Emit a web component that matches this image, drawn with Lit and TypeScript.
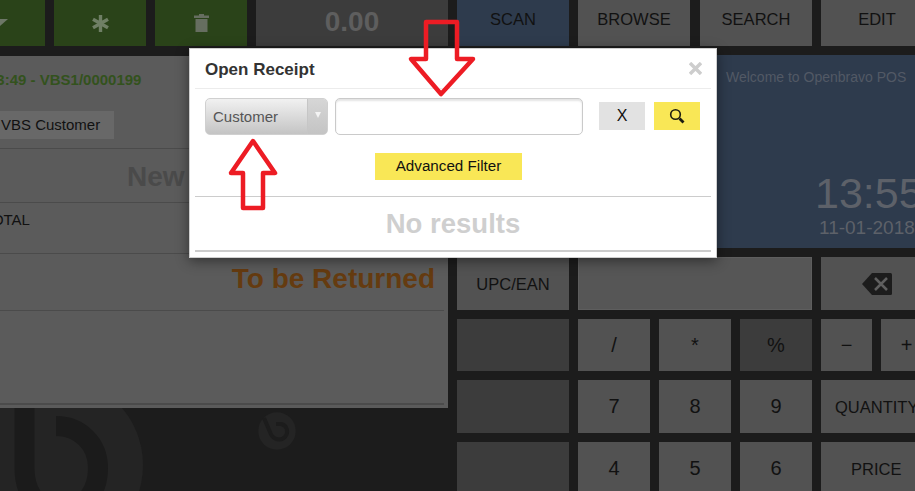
import { LitElement, html, css, svg } from "lit";
import { customElement } from "lit/decorators.js";

@customElement("app-root")
export class AppRoot extends LitElement {
  static styles = css`
    :host {
      display: block;
      position: relative;
      width: 915px;
      height: 491px;
      overflow: hidden;
      background: #1c1c1c;
      font-family: "Liberation Sans", Arial, sans-serif;
      color: #111;
    }
    * { box-sizing: border-box; }
    .watermark { position: absolute; left: 0; top: 0; width: 915px; height: 491px; }
    .screen {
      position: relative;
      display: grid;
      grid-template-columns: 448px 458px;
      column-gap: 9px;
      height: 491px;
      overflow: hidden;
    }
    .left { min-width: 0; overflow: hidden; }
    .left-top { display: flex; justify-content: flex-end; gap: 9px; height: 46px; }
    .tbtn {
      flex: 0 0 92px;
      background: #2a4319;
      display: flex; align-items: center; justify-content: center;
    }
    .total-box {
      flex: 0 0 192px;
      background: #3c3c3c;
      color: #5e5e5e;
      font-weight: 700;
      font-size: 28px;
      display: flex; align-items: center; justify-content: center;
      padding-bottom: 3px;
    }
    .panel {
      margin-top: 10px;
      height: 352px;
      background: #5b5b5b;
      padding-right: 4px;
      overflow: hidden;
    }
    .sec { border-bottom: 1px solid #4b4b4b; }
    .s1 { height: 93px; padding-top: 15px; }
    .s2 { height: 54px; padding: 12px 0 0 127px; font-size: 28px; font-weight: 700; color: #4a4a4a; line-height: 32px; }
    .s3 { height: 51px; padding-top: 8px; font-size: 15px; line-height: 17px; }
    .s3 span { display: block; margin-left: -17px; }
    .s4 { height: 57px; padding: 9px 9px 0 0; text-align: right; font-size: 28px; font-weight: 700; line-height: 32px; color: #653b10; }
    .s5 { height: 94px; border-bottom-width: 2px; }
    .ticket { font-size: 15px; font-weight: 700; line-height: 18px; color: #33521d; margin-left: -12px; white-space: nowrap; }
    .chip {
      margin-top: 22px;
      width: 114px; height: 28px;
      background: #686868;
      font-size: 15px;
      line-height: 27px;
      padding-left: 1px;
      white-space: nowrap;
    }
    .right { min-width: 0; overflow: hidden; }
    .tabs { display: flex; gap: 9px; height: 46px; }
    .tab {
      flex: 0 0 112px;
      background: #525252;
      font-size: 16.5px;
      display: flex; align-items: center; justify-content: center;
      padding-bottom: 7px;
    }
    .tab.active { background: #2e3b4d; }
    .tab.shift { margin-left: 1px; }
    .clock {
      margin-top: 9px;
      height: 193px;
      background: #2e3b4d;
      color: #5d6169;
      padding-left: 269px;
      overflow: hidden;
      white-space: nowrap;
    }
    .welcome { font-size: 14px; line-height: 16px; margin-top: 14px; color: #525965; }
    .time { font-size: 43px; line-height: 48px; margin: 84px 0 0 89px; }
    .date { font-size: 19px; line-height: 22px; margin: 0 0 0 93px; }
    .keys {
      margin-top: 9px;
      display: grid;
      grid-template-columns: 112px 72px 72px 72px 51px 51px;
      grid-template-rows: 53px 52px 53px 53px;
      gap: 9px;
    }
    .key {
      background: #525252;
      font-size: 20px;
      display: flex; align-items: center; justify-content: center;
      white-space: nowrap;
      overflow: hidden;
    }
    .key.word { font-size: 16.5px; padding-top: 1px; }
    .key.off { background: #3c3c3c; }
    .key.display { grid-column: span 3; background: #565656; border: 1px solid #5e5e5e; }
    .key.back { grid-column: span 2; }
    .key.wide { grid-column: span 2; justify-content: flex-start; }
    .key.q { padding-left: 14px; }
    .key.p { padding-left: 30px; }
    .modal {
      position: absolute;
      left: 189px; top: 48px;
      width: 528px; height: 210px;
      background: #fff;
      border: 1px solid #cfcfcf;
      box-shadow: 0 3px 12px rgba(0,0,0,.45);
      padding: 0 5px;
    }
    .head {
      height: 40px;
      border-bottom: 1px solid #ececec;
      display: flex; align-items: center; justify-content: space-between;
      padding: 0 9px 0 10px;
    }
    .title { font-size: 17px; font-weight: 700; color: #333; padding-top: 3px; }
    .filters {
      margin-top: 9px;
      display: flex; align-items: center;
      height: 37px;
      padding-left: 10px;
    }
    .select {
      width: 123px; height: 37px;
      border: 1px solid #d0d0d0;
      border-radius: 5px;
      background: linear-gradient(#f1f1f1, #c4c4c4);
      display: flex;
      font-size: 15px;
      color: #555;
      overflow: hidden;
    }
    .select .val { flex: 1; padding-left: 7px; line-height: 35px; }
    .select .arr {
      width: 20px;
      background: linear-gradient(#d6d6d6, #c4c4c4);
      border-left: 1px solid #c6c6c6;
      display: flex; justify-content: center; padding-top: 13px;
    }
    .tri { width: 0; height: 0; border-left: 3.5px solid transparent; border-right: 3.5px solid transparent; border-top: 6px solid #f4f4f4; }
    input {
      margin-left: 7px;
      width: 248px; height: 37px;
      border: 1px solid #cacaca;
      border-radius: 5px;
      box-shadow: inset 0 2px 2px #e4e4e4;
      background: #fff;
      outline: none;
    }
    .mbtn {
      width: 46px; height: 28px;
      margin-bottom: 1px;
      display: flex; align-items: center; justify-content: center;
      font-size: 16px;
    }
    .mbtn.x { margin-left: 16px; background: #e2e2e2; }
    .mbtn.s { margin-left: 9px; background: #f9e756; }
    .adv {
      margin: 18px 0 0 180px;
      width: 147px; height: 27px;
      background: #f9e756;
      font-size: 15.2px;
      display: flex; align-items: center; justify-content: center;
      padding-bottom: 2px;
    }
    .none {
      margin-top: 16px;
      height: 56px;
      border-top: 1px solid #cccccc;
      border-bottom: 2px solid #cccccc;
      display: flex; align-items: center; justify-content: center;
      font-size: 27.5px; font-weight: 700; color: #cfcfcf;
    }
    .arrow { position: absolute; left: 0; top: 0; width: 915px; height: 491px; pointer-events: none; }
  `;

  render() {
    return html`
      <svg class="watermark" viewBox="0 0 915 491">
        <circle cx="55" cy="465" r="88" fill="#242424"></circle>
        <path d="M56 426C80 426 98 444 98 468C98 495 80 512 61 512C40 512 24.5 495 24.5 468L24.5 400" fill="none" stroke="#1b1b1b" stroke-width="20"></path>
        <circle cx="277" cy="431" r="18.7" fill="#242424"></circle>
        <path d="M264 418L270 432C272 439 280 442 285 437C289 432 287 425 281 424L276 424" fill="none" stroke="#1c1c1c" stroke-width="4"></path>
      </svg>
      <div class="screen">
        <div class="left">
          <div class="left-top">
            <div class="tbtn">
              <svg width="18" height="8" viewBox="0 0 18 8"><path d="M0 0H18L9 8Z" fill="#6d7767"></path></svg>
            </div>
            <div class="tbtn">
              <svg width="17" height="17" viewBox="0 0 17 17" stroke="#6f7f65" stroke-width="3.4"><path d="M8.5 0V17M1 4.2L16 12.8M16 4.2L1 12.8"></path></svg>
            </div>
            <div class="tbtn">
              <svg width="15" height="18" viewBox="0 0 15 18" fill="#666e60"><path d="M5 0H10V1.5H15V4H0V1.5H5ZM1.5 5H13.5V18H1.5Z"></path></svg>
            </div>
            <div class="total-box">0.00</div>
          </div>
          <div class="panel">
            <div class="sec s1">
              <div class="ticket">13:49 - VBS1/0000199</div>
              <div class="chip">VBS Customer</div>
            </div>
            <div class="sec s2">New</div>
            <div class="sec s3"><span>TOTAL</span></div>
            <div class="sec s4">To be Returned</div>
            <div class="sec s5"></div>
          </div>
        </div>
        <div class="right">
          <div class="tabs">
            <div class="tab active">SCAN</div>
            <div class="tab">BROWSE</div>
            <div class="tab shift">SEARCH</div>
            <div class="tab">EDIT</div>
          </div>
          <div class="clock">
            <div class="welcome">Welcome to Openbravo POS</div>
            <div class="time">13:55</div>
            <div class="date">11-01-2018</div>
          </div>
          <div class="keys">
            <div class="key word">UPC/EAN</div>
            <div class="key display"></div>
            <div class="key back">
              <svg width="30" height="22" viewBox="0 0 30 22">
                <path d="M0 11L10 0H28.5Q30 0 30 1.5V20.5Q30 22 28.5 22H10Z" fill="#1c1c1c"></path>
                <path d="M13 5L25 17M25 5L13 17" stroke="#5f5f5f" stroke-width="2.5"></path>
              </svg>
            </div>
            <div class="key off"></div>
            <div class="key">/</div>
            <div class="key">*</div>
            <div class="key off">%</div>
            <div class="key">−</div>
            <div class="key">+</div>
            <div class="key off"></div>
            <div class="key">7</div>
            <div class="key">8</div>
            <div class="key">9</div>
            <div class="key word wide q">QUANTITY</div>
            <div class="key off"></div>
            <div class="key">4</div>
            <div class="key">5</div>
            <div class="key">6</div>
            <div class="key word wide p">PRICE</div>
          </div>
        </div>
      </div>
      <div class="modal">
        <div class="head">
          <div class="title">Open Receipt</div>
          <svg width="13" height="13" viewBox="0 0 13 13"><path d="M1 1L12 12M12 1L1 12" stroke="#cdcdcd" stroke-width="3.4"></path></svg>
        </div>
        <div class="filters">
          <div class="select">
            <div class="val">Customer</div>
            <div class="arr"><div class="tri"></div></div>
          </div>
          <input type="text" />
          <div class="mbtn x">X</div>
          <div class="mbtn s">
            <svg width="16" height="16" viewBox="0 0 16 16" fill="none" stroke="#1c1c10">
              <circle cx="6.5" cy="6.5" r="4.8" stroke-width="1.6"></circle>
              <path d="M10.5 10.5L14.5 14.5" stroke-width="2.8"></path>
            </svg>
          </div>
        </div>
        <div class="adv">Advanced Filter</div>
        <div class="none">No results</div>
      </div>
      <svg class="arrow" viewBox="0 0 915 491" fill="none" stroke="#ed1c24" stroke-width="4.5" stroke-linejoin="round">
        ${svg`<path d="M426 22H457V59H473L441 94L411 59H426Z"></path>
        <path d="M253 141L275 173H263V208H243V173H231Z"></path>`}
      </svg>
    `;
  }
}
